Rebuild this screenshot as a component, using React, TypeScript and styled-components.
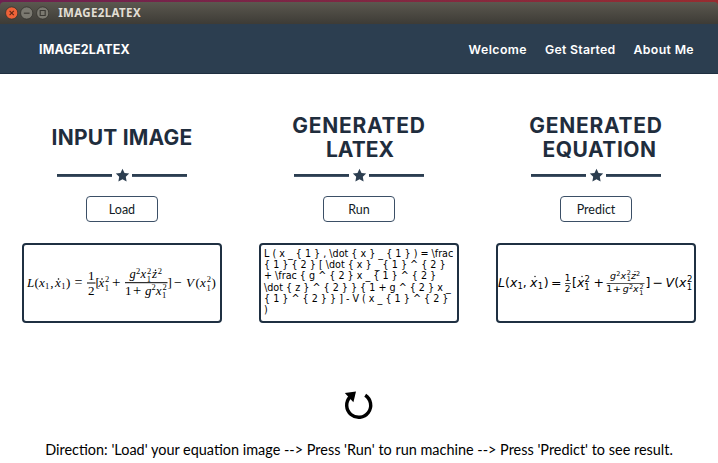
import React from 'react';
import styled, { createGlobalStyle } from 'styled-components';

const Global = createGlobalStyle`
  * { box-sizing: border-box; }
  html, body { margin: 0; padding: 0; overflow: hidden; background: #fff; }
`;

const Window = styled.div`
  width: 718px;
  height: 463px;
  display: flex;
  flex-direction: column;
  overflow: hidden;
  background: linear-gradient(90deg, #6e2050, #842840 60%, #982c30) top / 100% 6px no-repeat #fff;
  font-family: Lato, sans-serif;
`;

const TitleBar = styled.header`
  flex: none;
  height: 22px;
  margin-top: 2px;
  padding: 0 0 0 5px;
  display: flex;
  align-items: center;
  gap: 2px;
  border-radius: 4px 4px 0 0;
  background: linear-gradient(#5b584f, #3d3b36);
`;

const WindowTitle = styled.span`
  margin-left: 7px;
  font: 700 11.5px/20px 'Noto Sans', sans-serif;
  letter-spacing: 0.37px;
  color: #e2ded4;
`;

const Nav = styled.nav`
  flex: none;
  height: 50px;
  padding: 2px 24px 0 39px;
  display: flex;
  align-items: center;
  justify-content: space-between;
  background: #2c3e50;
  border-bottom: 1px solid #1f2f40;
  font-family: Inter, sans-serif;
  color: #fff;
`;

const Brand = styled.span`
  font-size: 12.5px;
  font-weight: 700;
  letter-spacing: 0.15px;
`;

const Links = styled.div`
  display: flex;
  gap: 18px;
`;

const NavLink = styled.a<{ $spacing: number }>`
  font-size: 12.3px;
  font-weight: 600;
  white-space: nowrap;
  letter-spacing: ${(p) => p.$spacing}px;
`;

const Columns = styled.main`
  display: grid;
  grid-template-columns: repeat(3, 200px);
  column-gap: 37px;
  padding: 39px 0 0 22px;
  height: 249px;
  flex: none;
`;

const Column = styled.section`
  display: flex;
  flex-direction: column;
  align-items: center;
`;

const Heading = styled.h2`
  margin: 0;
  height: 50px;
  display: flex;
  flex-direction: column;
  justify-content: center;
  align-items: center;
  font: 700 21px/24px Inter, sans-serif;
  color: #1f2d3d;
`;

const HeadingLine = styled.span<{ $spacing: number; $indent?: number }>`
  white-space: nowrap;
  letter-spacing: ${(p) => p.$spacing}px;
  padding-left: ${(p) => p.$indent ?? 0}px;
`;

const Divider = styled.div`
  width: 130px;
  height: 16px;
  margin-top: 4px;
  display: flex;
  align-items: center;
  justify-content: space-between;
`;

const Rule = styled.i`
  width: 55px;
  height: 3px;
  background: #2c3e50;
  border-bottom: 1px solid #45566a;
`;

const Button = styled.button`
  width: 72px;
  height: 26px;
  margin-top: 13px;
  padding: 1px 0 0;
  border: 1px solid #3b4f66;
  border-radius: 4px;
  background: #fff;
  font: 400 12.5px/24px Lato, sans-serif;
  color: #111b26;
`;

const Panel = styled.div`
  width: 200px;
  height: 80px;
  flex: none;
  margin-top: 21px;
  border: 2px solid #1f3042;
  border-radius: 4px;
  overflow: hidden;
  color: #000;
`;

const Source = styled.div`
  padding: 3px 0 0 3px;
  display: flex;
  flex-direction: column;
  font: 9.6px/11.2px 'DejaVu Sans', sans-serif;
  white-space: pre;
`;

const Formula = styled.svg<{ $serif?: boolean }>`
  display: block;
  width: 196px;
  height: 76px;
  font-family: ${(p) => (p.$serif ? "'Liberation Serif', serif" : "'DejaVu Sans', sans-serif")};
`;

const Footer = styled.footer`
  flex: 1;
  display: flex;
  flex-direction: column;
  align-items: center;
  padding-top: 66px;
`;

const Direction = styled.p`
  margin: 19px 0 0;
  font-size: 14.44px;
  line-height: 20px;
  white-space: nowrap;
  color: #000;
`;

const Star = () => (
  <svg width="15" height="15" viewBox="0 0 15 15">
    <path d="M7.5 .8 9.5 5l4.7.6-3.4 3.2.8 4.6-4.1-2.2-4.1 2.2.8-4.6L.8 5.6 5.5 5z" fill="#2c3e50" />
  </svg>
);

const WindowButton = ({ kind }: { kind: 'close' | 'min' | 'max' }) => (
  <svg width="13.4" height="14" viewBox="0 0 14 14">
    <circle cx="7" cy="7" r="6.4" fill={kind === 'close' ? '#ee6238' : '#7b7970'} stroke="#35332e" strokeWidth=".8" />
    <g fill="none" stroke={kind === 'close' ? '#602714' : '#3b3934'} strokeWidth="1.2">
      {kind === 'close' && <path d="m4.8 4.8 4.4 4.4m0-4.4L4.8 9.2" />}
      {kind === 'min' && <path d="M4 7.2h6" />}
      {kind === 'max' && <path d="M4.4 4.4h5.2v5.2H4.4z" />}
    </g>
  </svg>
);

type Glyph = [text: string, x: number, y: number, size: number, italic?: boolean];

const Glyphs = ({ items }: { items: Glyph[] }) => (
  <>
    {items.map(([t, x, y, size, italic], i) => (
      <text key={i} x={x} y={y} fontSize={size} fontStyle={italic ? 'italic' : 'normal'}>
        {t}
      </text>
    ))}
  </>
);

const inputGlyphs: Glyph[] = [
  ['L', 27, 287, 13, true], ['(', 34.5, 287, 13], ['x', 39, 287, 13, true], ['1', 45, 289, 8.5],
  [',', 50.3, 287, 13], ['x', 55, 287, 13, true], ['1', 61.3, 289, 8.5], [')', 66, 287, 13],
  ['=', 74.5, 287, 14], ['1', 88, 279.5, 13], ['2', 88, 294.5, 13], ['[', 95.5, 287, 13],
  ['x', 98.5, 287, 13, true], ['2', 105, 281.5, 8.5], ['1', 104.8, 290.5, 8.5], ['+', 112, 287.3, 15],
  ['g', 129.5, 278, 12.5, true], ['2', 136, 273.7, 8.5], ['x', 140.5, 278, 12.5, true],
  ['2', 147, 273.7, 8.5], ['1', 146.7, 281.5, 8.5], ['z', 152, 278, 13, true], ['2', 157.8, 273.7, 8.5],
  ['1', 125, 294.5, 13], ['+', 133, 294.7, 14.5], ['g', 145, 294.5, 13, true], ['2', 151.6, 290, 8.5],
  ['x', 155.7, 294.5, 13, true], ['2', 162.5, 290, 8.5], ['1', 162, 297.5, 8.5], [']', 167.5, 287, 13],
  ['−', 174, 287, 14], ['V', 186, 287, 13, true], ['(', 195.5, 287, 13], ['x', 200, 287, 13, true],
  ['2', 206.7, 281.5, 8.5], ['1', 206.5, 290.5, 8.5], [')', 211.5, 287, 13],
];

const outputGlyphs: Glyph[] = [
  ['L', 498, 287, 12.5, true], ['(', 505, 287, 12.5], ['x', 510, 287, 12.5, true], ['1', 517.5, 289, 8.5],
  [',', 522.7, 287, 12.5], ['x', 530, 287, 12.5, true], ['1', 537.7, 289, 8.5], [')', 543.7, 287, 12.5],
  ['=', 551, 287, 12.5], ['1', 564.7, 281.3, 9], ['2', 564.7, 292, 9], ['[', 572, 287, 12.5],
  ['x', 577, 287, 12.5, true], ['2', 584.5, 282, 8.5], ['1', 584.3, 290.3, 8.5], ['+', 593.5, 287, 12.5],
  ['g', 610, 279, 9.5, true], ['2', 616.3, 275.5, 6.5], ['x', 620.5, 279, 9.5, true],
  ['2', 626.8, 275.3, 6.5], ['1', 626.7, 281.3, 6.5], ['z', 631, 279, 9.5, true], ['2', 636, 275.5, 6.5],
  ['1', 606.3, 292.3, 9.5], ['+', 613, 292.3, 9.5], ['g', 622.7, 292.3, 9.5, true], ['2', 629, 289, 6.5],
  ['x', 633, 292.3, 9.5, true], ['2', 639.5, 289, 6.5], ['1', 639.3, 295.3, 6.5], [']', 645.5, 287, 12.5],
  ['−', 652.5, 287, 12.5], ['V', 665.5, 287, 12.5, true], ['(', 674.3, 287, 12.5], ['x', 679, 287, 12.5, true],
  ['2', 687, 282, 8.5], ['1', 686.8, 290.3, 8.5],
];

const sourceLines = [
  'L ( x _ { 1 } , \\dot { x } _ { 1 } ) = \\frac',
  '{ 1 } { 2 } [ \\dot { x } _ { 1 } ^ { 2 }',
  '+ \\frac { g ^ { 2 } x _ { 1 } ^ { 2 }',
  '\\dot { z } ^ { 2 } } { 1 + g ^ { 2 } x _',
  '{ 1 } ^ { 2 } } ] - V ( x _ { 1 } ^ { 2 }',
  ')',
];

const StarDivider = () => (
  <Divider>
    <Rule />
    <Star />
    <Rule />
  </Divider>
);

export default function App() {
  return (
    <Window>
      <Global />
      <TitleBar>
        <WindowButton kind="close" />
        <WindowButton kind="min" />
        <WindowButton kind="max" />
        <WindowTitle>IMAGE2LATEX</WindowTitle>
      </TitleBar>
      <Nav>
        <Brand>IMAGE2LATEX</Brand>
        <Links>
          <NavLink $spacing={0.45}>Welcome</NavLink>
          <NavLink $spacing={0.25}>Get Started</NavLink>
          <NavLink $spacing={0.35}>About Me</NavLink>
        </Links>
      </Nav>
      <Columns>
        <Column>
          <Heading>
            <HeadingLine $spacing={0.2}>INPUT IMAGE</HeadingLine>
          </Heading>
          <StarDivider />
          <Button>Load</Button>
          <Panel>
            <Formula $serif viewBox="24 245 196 76">
              <Glyphs items={inputGlyphs} />
              <path d="M87 283h8.5M125 282.7h42.5" stroke="#000" strokeWidth="1" />
              <circle cx="58.5" cy="279" r=".8" />
              <circle cx="102" cy="279" r=".8" />
              <circle cx="155.5" cy="270.3" r=".8" />
            </Formula>
          </Panel>
        </Column>
        <Column>
          <Heading>
            <HeadingLine $spacing={0.75}>GENERATED</HeadingLine>
            <HeadingLine $spacing={0} $indent={2}>LATEX</HeadingLine>
          </Heading>
          <StarDivider />
          <Button>Run</Button>
          <Panel>
            <Source>
              {sourceLines.map((line) => (
                <span key={line}>{line}</span>
              ))}
            </Source>
          </Panel>
        </Column>
        <Column>
          <Heading>
            <HeadingLine $spacing={0.75}>GENERATED</HeadingLine>
            <HeadingLine $spacing={0.5} $indent={7}>EQUATION</HeadingLine>
          </Heading>
          <StarDivider />
          <Button>Predict</Button>
          <Panel>
            <Formula viewBox="498 245 196 76">
              <Glyphs items={outputGlyphs} />
              <path d="M565 283.5h6M606.5 283.5h38" stroke="#555" strokeWidth="1" />
              <circle cx="535" cy="276.5" r=".7" />
              <circle cx="582" cy="276.5" r=".7" />
              <circle cx="635" cy="271.5" r=".6" />
            </Formula>
          </Panel>
        </Column>
      </Columns>
      <Footer>
        <svg width="30" height="32" viewBox="344 389 30 32">
          <path d="M365.2 395.2A12 12 0 1 1 350 397" fill="none" stroke="#000" strokeWidth="3.4" />
          <path d="m344.8 393 11.2-1.4-2.6 10.6z" fill="#000" />
        </svg>
        <Direction>
          Direction: 'Load' your equation image --&gt; Press 'Run' to run machine --&gt; Press 'Predict' to see result.
        </Direction>
      </Footer>
    </Window>
  );
}
